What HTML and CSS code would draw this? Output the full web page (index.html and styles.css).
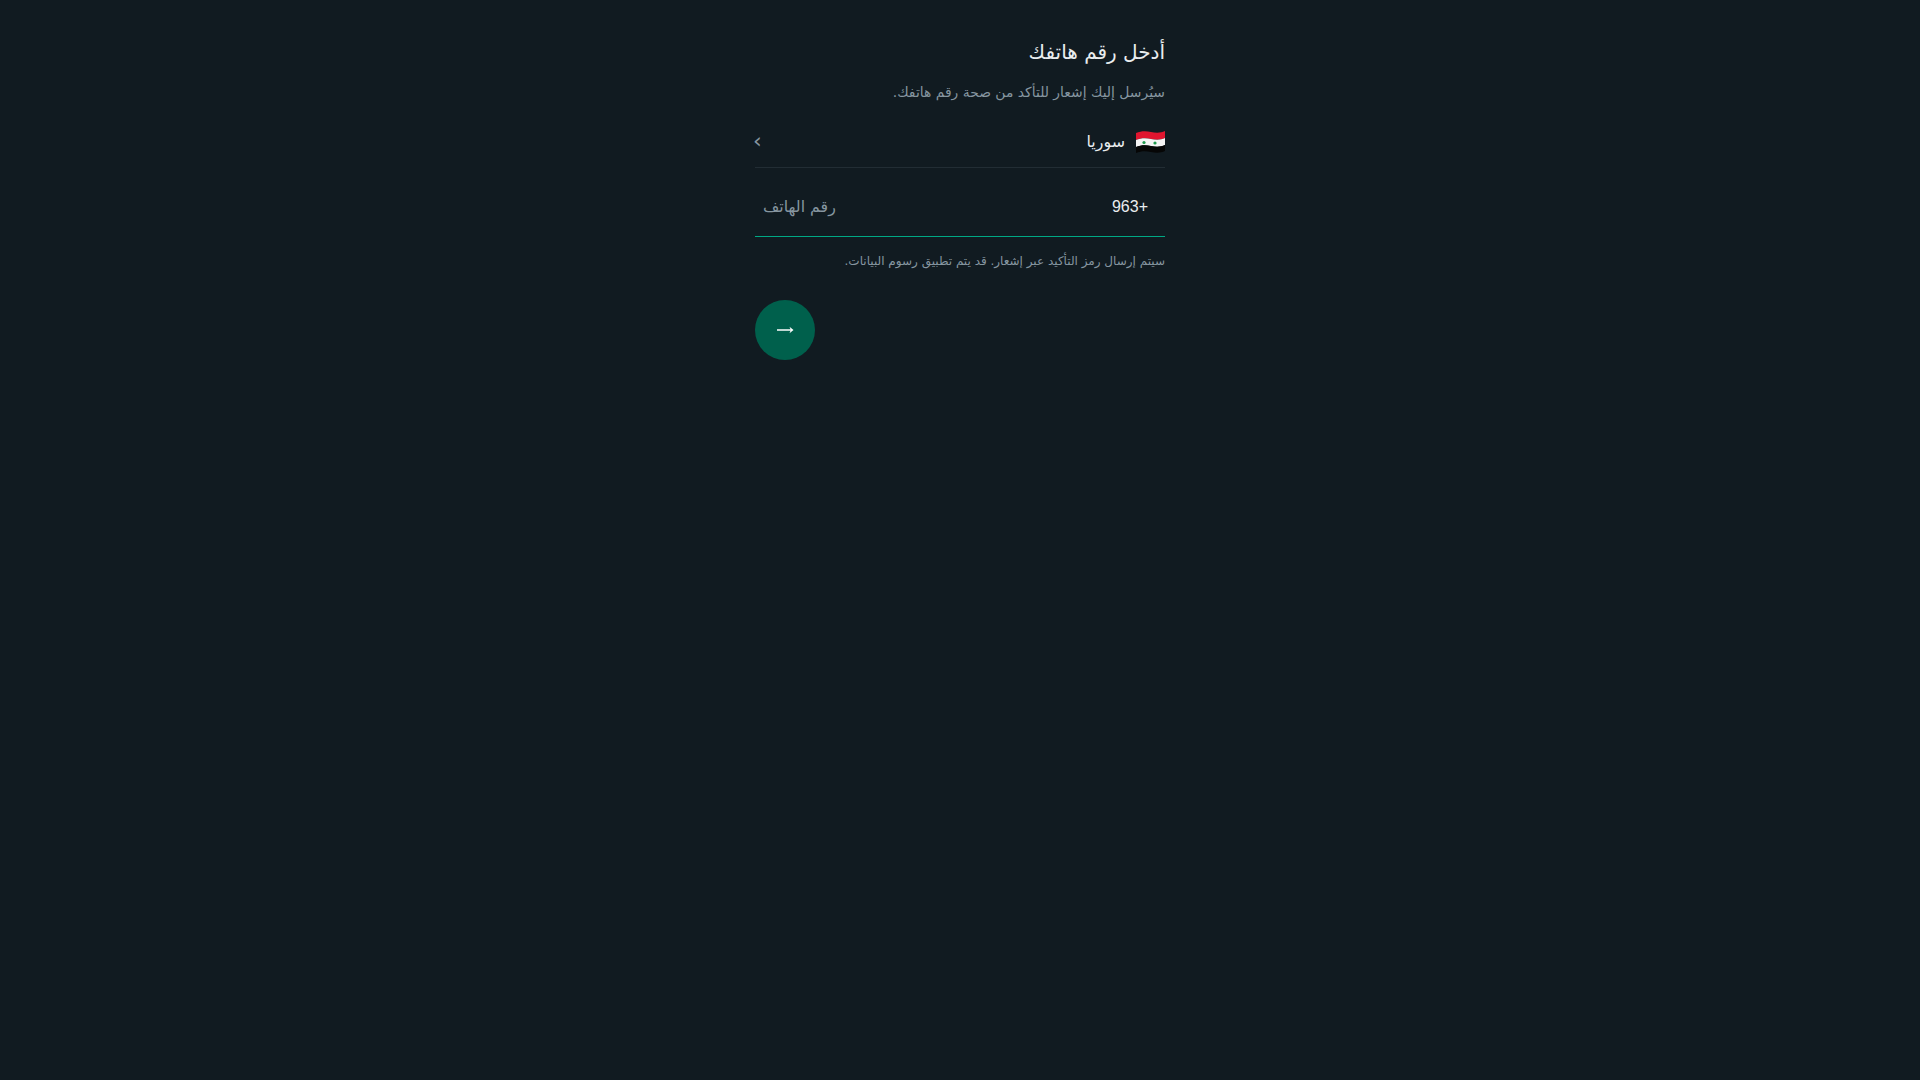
FILE: index.html
```html
<!DOCTYPE html>
<html lang="ar" dir="rtl">

<head>
    <meta charset="UTF-8">
    <meta name="viewport" content="width=device-width, initial-scale=1.0">
    <title>أدخل رقم هاتفك</title>
    <link rel="stylesheet" href="styles.css">
</head>

<body>
    <main class="login">
        <h1 class="title">أدخل رقم هاتفك</h1>
        <p class="subtitle">سيُرسل إليك إشعار للتأكد من صحة رقم هاتفك.</p>

        <!-- Country -->
        <div class="country">
            <svg class="flag" width="29" height="24" viewBox="0 0 29 24">
                <path fill="#e0152f" d="M0 3C5 1 10 1 15 2s10 1 14-1v7c-4 2-9 2-14 1S5 8 0 10z" />
                <path fill="#f4f4f4" d="M0 10c5-2 10-2 15-1s10 1 14-1v7c-4 2-9 2-14 1S5 15 0 17z" />
                <path fill="#060606" d="M0 17c5-2 10-2 15-1s10 1 14-1v6c-4 2-9 2-14 1S5 21 0 23z" />
                <circle fill="#1f9a4d" cx="8" cy="12.500" r="1.600" />
                <circle fill="#1f9a4d" cx="19" cy="13" r="1.600" />
            </svg>
            <span class="country-name">سوريا</span>
            <span class="chevron">›</span>
        </div>

        <!-- Phone -->
        <div class="phone">
            <span class="prefix">+963</span>
            <span class="placeholder">رقم الهاتف</span>
        </div>
        <p class="hint">سيتم إرسال رمز التأكيد عبر إشعار. قد يتم تطبيق رسوم البيانات.</p>

        <button type="button" class="next">
            <svg width="20" height="12" viewBox="0 0 20 12">
                <path d="M2 6h15" fill="none" stroke="#fff" stroke-width="1.500" />
                <path d="M14.500 2.800 18.500 6 14.500 9.200 15.800 6z" fill="#fff" />
            </svg>
        </button>
    </main>
</body>

</html>
```

FILE: styles.css
```css
/* General */
body {
    margin: 0;
    min-height: 1080px;
    background: #111b21;
    color: #e9edef;
    font-family: 'DejaVu Sans', sans-serif;
}

.login {
    width: 410px;
    margin: 0 auto;
    padding-top: 40px;
}

.title {
    margin: 0 0 18px;
    font-size: 20px;
    font-weight: 400;
    line-height: 24px;
}

.subtitle {
    margin: 0 0 14px;
    font-size: 13.900px;
    line-height: 20px;
    color: #8696a0;
}

/* Country */
.country {
    display: flex;
    align-items: center;
    height: 51px;
    border-bottom: 1px solid #222d34;
}

.flag {
    margin-left: 11px;
}

.country-name {
    font-size: 15.900px;
}

.chevron {
    margin-right: auto;
    margin-left: -2px;
    margin-bottom: 2px;
    font-size: 22px;
    color: #8696a0;
}

/* Phone */
.phone {
    display: flex;
    justify-content: space-between;
    align-items: center;
    height: 69px;
    padding: 9px 17px 0 8px;
    border-bottom: 1px solid #00a884;
    box-sizing: border-box;
}

.prefix {
    font-family: 'Liberation Sans', sans-serif;
    font-size: 16px;
}

.placeholder {
    font-size: 15.800px;
    color: #8696a0;
}

.hint {
    margin: 16px 0 31px;
    font-size: 12px;
    line-height: 16px;
    color: #8696a0;
}

.next {
    display: flex;
    align-items: center;
    justify-content: center;
    width: 60px;
    height: 60px;
    margin-right: auto;
    padding: 0;
    border: none;
    border-radius: 50%;
    background: #00604c;
    cursor: pointer;
}
```
